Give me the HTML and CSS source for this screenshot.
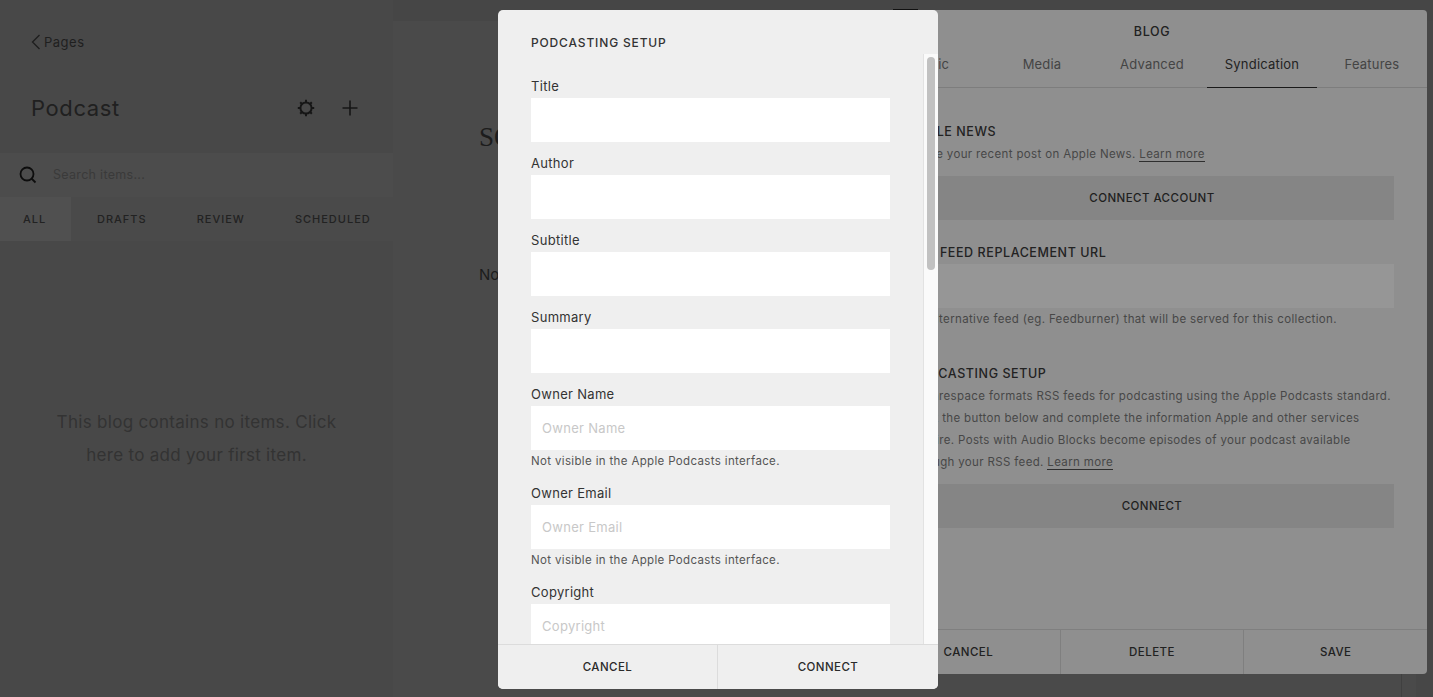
FILE: index.html
```html
<!DOCTYPE html>
<html lang="en">
<head>
<meta charset="utf-8">
<title>Podcasting Setup</title>
<link rel="stylesheet" href="styles.css">
</head>
<body>
<div class="app">
  <aside class="sidebar">
    <a class="back"><svg class="back-icon" width="10" height="16" viewBox="0 0 10 16"><path d="M8.500 1 1.500 8l7 7" fill="none" stroke="#1e1e1e" stroke-width="1.300"/></svg>Pages</a>
    <div class="side-head">
      <h1>Podcast</h1>
      <div class="side-actions">
        <svg width="18" height="18" viewBox="0 0 18 18"><circle cx="9" cy="9" r="5.600" fill="none" stroke="#161616" stroke-width="2"/><path d="M9 .8v3M9 14.200v3M.8 9h3M14.200 9h3M3.200 3.200l2 2M12.800 12.800l2 2M14.800 3.200l-2 2M5.200 12.800l-2 2" stroke="#161616" stroke-width="2"/></svg>
        <svg width="16" height="16" viewBox="0 0 16 16"><path d="M8 .5v15M.5 8h15" stroke="#161616" stroke-width="1.600"/></svg>
      </div>
    </div>
    <div class="search">
      <svg width="18" height="18" viewBox="0 0 18 18"><circle cx="8" cy="8" r="6.500" fill="none" stroke="#0d0d0d" stroke-width="1.800"/><path d="m12.500 12.500 4 4" stroke="#0d0d0d" stroke-width="1.800"/></svg>
      <span>Search items...</span>
    </div>
    <nav class="filters">
      <span class="filter active">ALL</span>
      <span class="filter f-drafts">DRAFTS</span>
      <span class="filter f-gap">REVIEW</span>
      <span class="filter f-gap">SCHEDULED</span>
    </nav>
    <p class="empty">This blog contains no items. Click here to add your first item.</p>
  </aside>
  <main class="preview">
    <div class="preview-main">
      <h2>SOMETHING</h2>
      <p>No items</p>
    </div>
    <div class="preview-rail"></div>
    <div class="preview-edge"></div>
  </main>
</div>
<div class="peek"></div>

<section class="blog">
  <header class="blog-title">BLOG</header>
  <nav class="tabs">
    <span class="tab">Basic</span><span class="tab">Media</span><span class="tab">Advanced</span><span class="tab on">Syndication</span><span class="tab">Features</span>
  </nav>
  <div class="blog-body">
    <h3>APPLE NEWS</h3>
    <p class="note">Share your recent post on Apple News. <a>Learn more</a></p>
    <div class="wide-btn">CONNECT ACCOUNT</div>
    <h3 class="h-feed">RSS FEED REPLACEMENT URL</h3>
    <div class="feed-input"></div>
    <p class="note note-feed">An alternative feed (eg. Feedburner) that will be served for this collection.</p>
    <h3 class="h-pod">PODCASTING SETUP</h3>
    <p class="note">Squarespace formats RSS feeds for podcasting using the Apple Podcasts standard.<br>Click the button below and complete the information Apple and other services<br>require. Posts with Audio Blocks become episodes of your podcast available<br>through your RSS feed. <a>Learn more</a></p>
    <div class="wide-btn">CONNECT</div>
  </div>
  <footer class="blog-foot"><span>CANCEL</span><span>DELETE</span><span>SAVE</span></footer>
</section>

<section class="modal">
  <h2 class="modal-title">PODCASTING SETUP</h2>
  <div class="modal-scroll">
    <div class="fields">
      <label>Title</label><div class="field"></div>
      <label>Author</label><div class="field"></div>
      <label>Subtitle</label><div class="field"></div>
      <label>Summary</label><div class="field"></div>
      <label>Owner Name</label><div class="field ph">Owner Name</div>
      <small>Not visible in the Apple Podcasts interface.</small>
      <label>Owner Email</label><div class="field ph">Owner Email</div>
      <small>Not visible in the Apple Podcasts interface.</small>
      <label>Copyright</label><div class="field ph">Copyright</div>
    </div>
    <div class="track"><div class="thumb"></div></div>
  </div>
  <footer class="modal-foot"><span>CANCEL</span><span>CONNECT</span></footer>
</section>
</body>
</html>
```
FILE: styles.css
```css
* { box-sizing: border-box; }
html, body { margin: 0; height: 100%; overflow: hidden; }
body { background: #464646; font-family: "Inter", "Liberation Sans", sans-serif; color: #333; }
.app { display: flex; height: 697px; }

.sidebar { width: 393px; flex: none; background: #484848; color: #1f1f1f; display: flex; flex-direction: column; }
.back { display: flex; align-items: center; gap: 3px; margin: 34px 0 0 31px; height: 16px; font-size: 13px; letter-spacing: .5px; color: #1f1f1f; }
.side-head { display: flex; align-items: center; justify-content: space-between; margin: 41px 0 0; padding: 0 35px 0 31px; height: 34px; }
.side-head h1 { margin: 0; font-size: 22px; font-weight: 400; letter-spacing: .6px; color: #202020; }
.side-actions { display: flex; align-items: center; gap: 27px; }
.search { display: flex; align-items: center; gap: 16px; margin-top: 28px; padding: 0 0 1px 19px; height: 44px; background: #4c4c4c; font-size: 12.500px; letter-spacing: .3px; color: #3a3a3a; }
.filters { display: flex; height: 44px; background: #4a4a4a; font-size: 11px; font-weight: 450; letter-spacing: 1px; color: #222; }
.filter { display: flex; align-items: center; }
.filter.active { width: 71px; padding-left: 23px; background: #505050; }
.f-drafts { margin-left: 26px; }
.f-gap { margin-left: 50px; }
.empty { margin: 165px auto 0; width: 300px; text-align: center; font-size: 17px; line-height: 33px; letter-spacing: .3px; color: #333; }

.preview { flex: 1; display: flex; margin-top: 21px; background: #4a4a4a; color: #1c1c1c; }
.preview-main { flex: 1; padding-left: 86px; }
.preview-main h2 { margin: 101px 0 0; font-family: "Liberation Serif", serif; font-weight: 400; font-size: 27px; white-space: nowrap; height: 30px; }
.preview-main p { margin: 113px 0 0; font-size: 15px; }
.preview-rail { width: 15px; border-left: 1px solid #404040; }
.preview-edge { width: 17px; background: #474747; }
.peek { position: absolute; left: 893px; top: 9px; width: 25px; height: 1px; background: #111; }

.blog { position: absolute; left: 877px; top: 10px; width: 550px; height: 664px; border-radius: 4px; background: #8f8f8f; display: flex; flex-direction: column; color: #212121; }
.blog-title { height: 43px; padding-top: 14px; text-align: center; font-size: 12.500px; font-weight: 450; letter-spacing: .6px; }
.tabs { display: flex; height: 35px; border-bottom: 1px solid #7d7d7d; font-size: 13px; letter-spacing: .2px; color: #444; }
.tab { flex: 1; text-align: center; padding-top: 3px; }
.tab.on { color: #222; border-bottom: 1px solid #1a1a1a; height: 35px; }
.blog-body { flex: 1; padding: 36px 33px 0; font-size: 11.500px; }
.blog-body h3 { margin: 0; font-size: 12.500px; font-weight: 450; letter-spacing: .58px; color: #222; white-space: nowrap; line-height: 15px; }
.note { margin: 4px 0 0; line-height: 22px; letter-spacing: .35px; color: #474747; white-space: nowrap; }
.note a { color: #474747; border-bottom: 1px solid #2e2e2e; }
.wide-btn { margin-top: 11px; height: 44px; background: #858585; display: flex; align-items: center; justify-content: center; font-size: 11.500px; font-weight: 450; letter-spacing: .45px; color: #1f1f1f; }
.blog-body .h-feed { margin-top: 25px; }
.feed-input { margin-top: 4px; height: 44px; background: #969696; }
.note.note-feed { margin-top: 0; }
.blog-body .h-pod { margin-top: 36px; }
.blog-foot { display: flex; height: 45px; border-top: 1px solid #7f7f7f; }
.blog-foot span { flex: 1; display: flex; align-items: center; justify-content: center; font-size: 11.500px; font-weight: 450; letter-spacing: .45px; border-left: 1px solid #7f7f7f; }
.blog-foot span:first-child { border-left: 0; }

.modal { position: absolute; left: 498px; top: 10px; width: 440px; height: 679px; border-radius: 5px; background: #efefef; display: flex; flex-direction: column; overflow: hidden; color: #333; }
.modal-title { margin: 0; padding: 26px 33px 0; height: 44px; font-size: 12px; font-weight: 450; letter-spacing: .85px; line-height: 14px; flex: none; }
.modal-scroll { flex: 1; display: flex; min-height: 0; overflow: hidden; }
.fields { width: 425px; flex: none; padding: 24px 33px 0; display: flex; flex-direction: column; }
.fields label { font-size: 13px; letter-spacing: .3px; line-height: 16px; height: 16px; margin-bottom: 4px; color: #333; }
.field { flex: none; width: 359px; height: 44px; margin-bottom: 13px; background: #fff; padding: 0 11px; display: flex; align-items: center; font-size: 13px; letter-spacing: .3px; color: #c8c8c8; }
.field.ph { margin-bottom: 0; }
.fields small { font-size: 11.500px; letter-spacing: .35px; line-height: 22px; height: 22px; margin: 0 0 13px; color: #555; }
.track { width: 15px; flex: none; background: #fafafa; border-left: 1px solid #e2e2e2; padding: 3px 3px 0 3px; }
.thumb { height: 213px; border-radius: 4px; background: #c1c1c1; }
.modal-foot { flex: none; display: flex; height: 45px; border-top: 1px solid #dcdcdc; background: #efefef; }
.modal-foot span { display: flex; align-items: center; justify-content: center; font-size: 11.500px; font-weight: 450; letter-spacing: .45px; color: #2a2a2a; }
.modal-foot span:first-child { width: 220px; border-right: 1px solid #dcdcdc; }
.modal-foot span:last-child { flex: 1; }
```
